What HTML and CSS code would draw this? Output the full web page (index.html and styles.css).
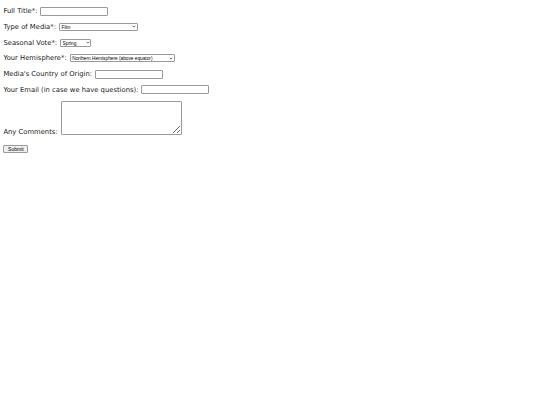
FILE: index.html
```html
<!DOCTYPE html>
<html>
<head>
<meta charset="utf-8">
<link rel="stylesheet" href="styles.css">
</head>
<body>
<form class="form">
  <div class="row"><label>Full Title*:</label><input class="text" type="text"></div>
  <div class="row"><label>Type of Media*:</label><span class="sel-wrap"><select class="sel sel-media"><option>Film</option></select><svg class="chev" viewBox="0 0 6 4"><path d="M0.8 0.8 L3 3 L5.2 0.8" fill="none" stroke="#222" stroke-width="1"/></svg></span></div>
  <div class="row"><label>Seasonal Vote*:</label><span class="sel-wrap"><select class="sel sel-season"><option>Spring</option></select><svg class="chev" viewBox="0 0 6 4"><path d="M0.8 0.8 L3 3 L5.2 0.8" fill="none" stroke="#222" stroke-width="1"/></svg></span></div>
  <div class="row"><label>Your Hemisphere*:</label><span class="sel-wrap"><select class="sel sel-hemi"><option>Northern Hemisphere (above equator)</option></select><svg class="chev" viewBox="0 0 6 4"><path d="M0.8 0.8 L3 3 L5.2 0.8" fill="none" stroke="#222" stroke-width="1"/></svg></span></div>
  <div class="row"><label>Media's Country of Origin:</label><input class="text" type="text"></div>
  <div class="row"><label>Your Email (in case we have questions):</label><input class="text" type="text"></div>
  <div class="row row-comments"><label class="bottom-label">Any Comments:</label><textarea class="area"></textarea></div>
  <div class="row row-submit"><button class="submit" type="button">Submit</button></div>
</form>
</body>
</html>
```
FILE: styles.css
```css
html, body {
  margin: 0;
  padding: 0;
  background: #fff;
}
body {
  padding: 6px 3.4px;
  font-family: "DejaVu Sans", Verdana, sans-serif;
  font-size: 6.8px;
  color: #1a1a1a;
}
.form {
  display: flex;
  flex-direction: column;
  gap: 5.8px;
}
.row {
  display: flex;
  align-items: center;
  gap: 3px;
  height: 10px;
}
.text {
  box-sizing: border-box;
  width: 68px;
  height: 9px;
  margin: 0;
  padding: 0;
  border: 1px solid #9a9a9a;
  border-radius: 1px;
  background: #fff;
}
.sel-wrap {
  position: relative;
  display: flex;
}
.sel {
  -webkit-appearance: none;
  appearance: none;
  box-sizing: border-box;
  height: 8px;
  margin: 0;
  padding: 1px 0 0 1.5px;
  border: 1px solid #9a9a9a;
  border-radius: 1px;
  background: #fff;
  font-family: "Liberation Sans", Arial, sans-serif;
  font-size: 4.75px;
  line-height: 5px;
  color: #000;
}
.chev {
  position: absolute;
  right: 1.5px;
  top: 2.4px;
  width: 4px;
  height: 3px;
  pointer-events: none;
}
.sel-media { width: 79px; }
.sel-season { width: 31px; }
.sel-hemi { width: 105px; }
.row-comments {
  align-items: flex-end;
  height: 34px;
}
.bottom-label {
  margin-bottom: -1.5px;
}
.area {
  box-sizing: border-box;
  width: 121px;
  height: 34px;
  margin: 0;
  border: 1px solid #9a9a9a;
  border-radius: 1px;
  resize: both;
}
.row-submit {
  margin-top: 4px;
  height: 8px;
}
.submit {
  box-sizing: border-box;
  width: 25px;
  height: 8px;
  margin: 0;
  padding: 0;
  border: 1px solid #9a9a9a;
  border-radius: 1px;
  background: #efefef;
  font-family: "Liberation Sans", Arial, sans-serif;
  font-size: 5px;
  color: #000;
  line-height: 6px;
}
```
